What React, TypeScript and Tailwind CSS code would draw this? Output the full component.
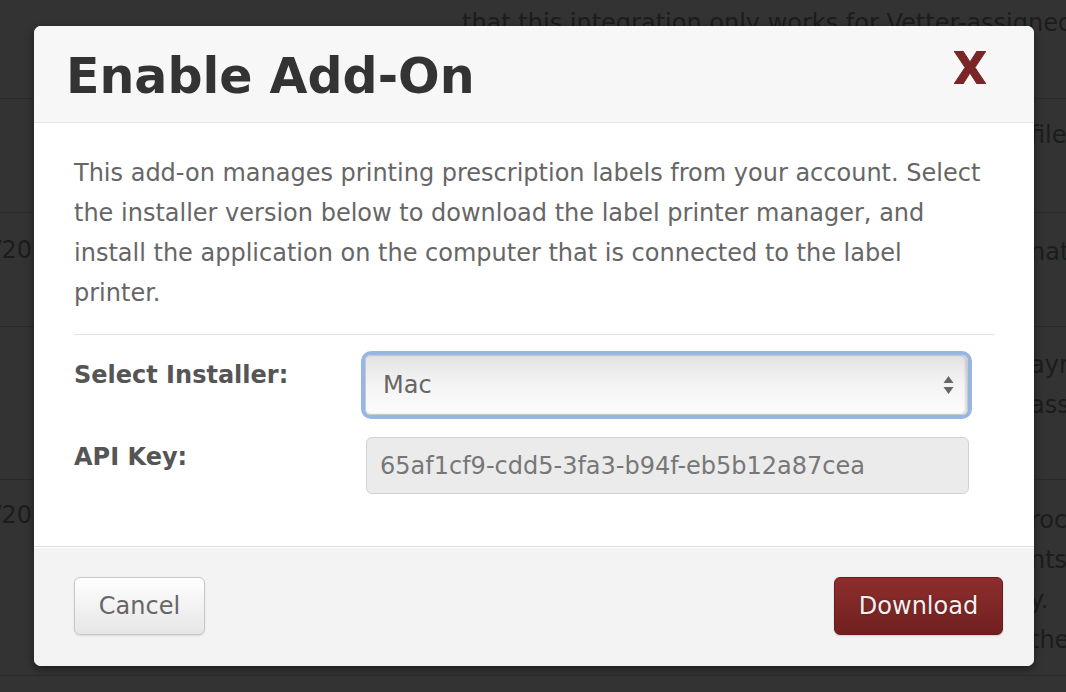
import React from "react";

function BgRow({ h, left, right, lpt = 16, rpt = 19 }: { h: string; left?: string[]; right?: string[]; lpt?: number; rpt?: number }) {
  return (
    <div className={`${h} border-b border-[#2a2a2a] grid grid-cols-[32px_1fr_36px]`}>
      <div className="flex flex-col items-end overflow-hidden whitespace-nowrap" style={{ paddingTop: lpt }}>
        {(left || []).map((t, i) => (
          <div key={i}>{t}</div>
        ))}
      </div>
      <div />
      <div className="flex flex-col whitespace-nowrap overflow-hidden" style={{ paddingTop: rpt }}>
        {(right || []).map((t, i) => (
          <div key={i}>{t}</div>
        ))}
      </div>
    </div>
  );
}

export default function App() {
  return (
    <div className="relative w-[1066px] h-[692px] overflow-hidden bg-[#333333] font-['DejaVu_Sans',sans-serif]">
      {/* page behind the overlay */}
      <div className="flex flex-col text-[24px] leading-[40px] text-[#1c1c1c]">
        <div className="h-[99px] border-b border-[#2a2a2a] pl-[462px] pt-[3px] whitespace-nowrap overflow-hidden">
          that this integration only works for Vetter-assigned
        </div>
        <BgRow h="h-[114px]" right={["file"]} rpt={16} />
        <BgRow h="h-[114px]" left={["03/20"]} right={["nat"]} lpt={17} rpt={19} />
        <BgRow h="h-[153px]" right={["ayr", "ass"]} rpt={18} />
        <BgRow h="h-[196px]" left={["03/20"]} right={["roc", "nts.", "y.", "the"]} lpt={15} rpt={20} />
        <div className="h-[20px]" />
      </div>

      {/* modal */}
      <div className="absolute left-[34px] top-[26px] w-[1000px] rounded-[7px] bg-white overflow-hidden shadow-[0_3px_9px_rgba(0,0,0,0.45)]">
        <div className="h-[97px] bg-[#f7f7f7] border-b border-[#e6e6e6] flex justify-between pl-[32px] pr-[48px]">
          <h3 className="mt-[26px] text-[49px] leading-[49px] font-bold text-[#333333] whitespace-nowrap">Enable Add-On</h3>
          <svg className="mt-[25px]" width="32" height="33" viewBox="0 0 32 33">
            <polygon
              points="0,0 9,0 16,11 23,0 32,0 21,16.5 32,33 23,33 16,22 9,33 0,33 11,16.5"
              fill="#7a2626"
              stroke="#7a2626"
              strokeWidth="1"
              strokeLinejoin="round"
            />
          </svg>
        </div>

        <div className="px-[40px] pt-[30px] pb-[52px]">
          <p className="text-[24px] leading-[40px] text-[#666666]">
            This add-on manages printing prescription labels from your account. Select
            <br />
            the installer version below to download the label printer manager, and
            <br />
            install the application on the computer that is connected to the label
            <br />
            printer.
          </p>
          <div className="mt-[21px] h-px bg-[#e2e2e2]" />
          <div className="mt-[20px] flex flex-col gap-[22px]">
            <div className="flex">
              <div className="w-[291px] text-[24px] leading-[40px] font-bold text-[#555555]">Select Installer:</div>
              <div className="w-[603px] h-[60px] rounded-[6px] border border-[#c9c9c9] bg-gradient-to-b from-[#e4e4e4] via-[#f4f4f4] to-[#fcfcfc] shadow-[0_0_0_4px_#97b6e6,inset_-2px_0_2px_rgba(0,0,0,0.12)] flex items-center justify-between pl-[17px] pr-[13px]">
                <span className="text-[24px] text-[#666666]">Mac</span>
                <svg width="11" height="20" viewBox="0 0 11 20">
                  <polygon points="0.5,8 5.5,1 10.5,8" fill="#666666" />
                  <polygon points="0.5,12 5.5,19 10.5,12" fill="#666666" />
                </svg>
              </div>
            </div>
            <div className="flex">
              <div className="w-[292px] text-[24px] leading-[40px] font-bold text-[#555555]">API Key:</div>
              <div className="w-[603px] h-[57px] rounded-[6px] border border-[#d2d2d2] bg-[#ebebeb] flex items-center pl-[13px] text-[24px] text-[#777777]">
                65af1cf9-cdd5-3fa3-b94f-eb5b12a87cea
              </div>
            </div>
          </div>
        </div>

        <div className="border-t border-[#dddddd] bg-[#f3f3f3] shadow-[inset_0_1px_0_#ffffff] pt-[30px] pb-[31px] pl-[40px] pr-[31px] flex justify-between">
          <button className="w-[131px] h-[58px] rounded-[6px] border border-[#c6c6c6] bg-gradient-to-b from-[#ffffff] to-[#e6e6e6] shadow-[0_1px_2px_rgba(0,0,0,0.1)] text-[24px] text-[#666666]">
            Cancel
          </button>
          <button className="w-[169px] h-[58px] rounded-[6px] border border-[#6a1c1c] bg-gradient-to-b from-[#8e2d2d] to-[#712020] shadow-[0_1px_2px_rgba(0,0,0,0.15)] text-[24px] text-[#f6f0f0] [text-shadow:0_0_2px_rgba(0,0,0,0.35)]">
            Download
          </button>
        </div>
      </div>
    </div>
  );
}
